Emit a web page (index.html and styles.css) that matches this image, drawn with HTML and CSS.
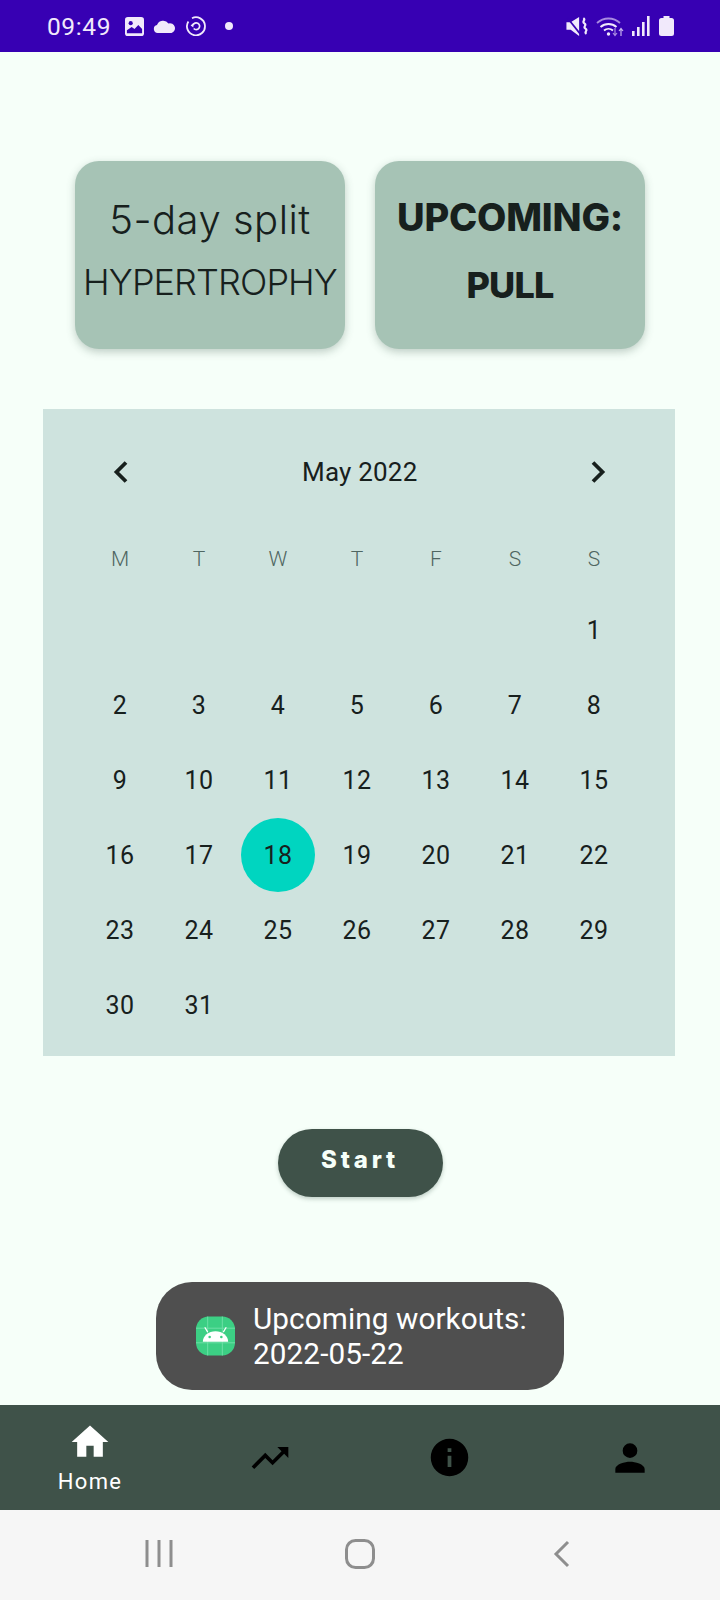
FILE: index.html
```html
<!DOCTYPE html>
<html>
	<head>
		<meta charset="UTF-8">
		<title>Home</title>
		<link rel="stylesheet" href="styles.css">
	</head>
	<body>
		<div class="status">
			<span class="time">09:49</span>
			<svg class="st-img" viewBox="0 0 20 20"><rect width="20" height="20" rx="3" fill="#f1e9fb"/><circle cx="6" cy="6.5" r="2.2" fill="#3700b3"/><path d="M2 17v-3l5-3.5 3 2 4-4 4 4v4.5z" fill="#3700b3"/></svg>
			<svg class="st-cloud" viewBox="0 0 22 13"><path d="M4.500 13a4 4 0 0 1-1-7.900A6.500 6.500 0 0 1 15 3.500a4.800 4.800 0 0 1 3 9.500z" fill="#f1e9fb"/></svg>
			<svg class="st-sync" viewBox="0 0 20 20"><path d="M6 2.200a9 9 0 1 1-3.600 3.200" fill="none" stroke="#f1e9fb" stroke-width="1.800"/><path d="M7 9.200a3.400 3.400 0 1 1 .7 3.300" fill="none" stroke="#f1e9fb" stroke-width="1.700"/><path d="M4.600 9.600l2.800-2.600v4.600z" fill="#f1e9fb"/></svg>
			<span class="st-dot"></span>
			<span class="st-gap"></span>
			<svg class="st-mute" viewBox="0 0 20 18"><path d="M0 5h4l8-5v18l-8-6H0z" fill="#f1e9fb"/><path d="M1 1l12 15" stroke="#3700b3" stroke-width="1.600"/><path d="M16 1c3 2-2 3 1 5s-2 3 1 5-2 3 1 5" fill="none" stroke="#f1e9fb" stroke-width="2"/></svg>
			<svg class="st-wifi" viewBox="0 0 29 21"><path d="M1 7a17 17 0 0 1 23 0" fill="none" stroke="#a98be0" stroke-width="1.800"/><path d="M4.500 11a12 12 0 0 1 16 0M8 14.500a7 7 0 0 1 9 0" fill="none" stroke="#f1e9fb" stroke-width="1.900"/><circle cx="12.500" cy="18" r="1.700" fill="#f1e9fb"/><path d="M19 12v7m-2-2l2 2.500 2-2.500" fill="none" stroke="#a98be0" stroke-width="1.200"/><path d="M25 20v-7m-2 2l2-2.500 2 2.500" fill="none" stroke="#c8b4ee" stroke-width="1.200"/></svg>
			<svg class="st-signal" viewBox="0 0 18 20"><rect x="0" y="15" width="2.600" height="5" fill="#f1e9fb"/><rect x="5" y="11" width="2.600" height="9" fill="#f1e9fb"/><rect x="10" y="6" width="2.600" height="14" fill="#f1e9fb"/><rect x="15" y="0" width="2.600" height="20" fill="#f1e9fb"/></svg>
			<svg class="st-batt" viewBox="0 0 15 20"><path d="M4.500 0h6v2h2a2.500 2.500 0 0 1 2.500 2.500V17.500a2.500 2.500 0 0 1-2.500 2.500h-10A2.500 2.500 0 0 1 0 17.500V4.500A2.500 2.500 0 0 1 2.500 2h2z" fill="#f1e9fb"/></svg>
		</div>

		<div class="main">
			<div class="cards">
				<div class="card">
					<p class="split">5-day split</p>
					<p class="kind">HYPERTROPHY</p>
				</div>
				<div class="card bold">
					<p>UPCOMING:</p>
					<p class="pull">PULL</p>
				</div>
			</div>

			<div class="calendar">
				<div class="cal-head">
					<svg class="arrow" viewBox="0 0 18 26"><path d="M15 3.500L5.500 13l9.500 9.500" fill="none" stroke="#17201d" stroke-width="3.800"/></svg>
					<span class="month">May 2022</span>
					<svg class="arrow" viewBox="0 0 18 26"><path d="M3 3.500l9.500 9.500L3 22.500" fill="none" stroke="#17201d" stroke-width="3.800"/></svg>
				</div>
				<div class="week">
					<span>M</span><span>T</span><span>W</span><span>T</span><span>F</span><span>S</span><span>S</span>
				</div>
				<div class="days">
					<span></span><span></span><span></span><span></span><span></span><span></span><span>1</span>
					<span>2</span><span>3</span><span>4</span><span>5</span><span>6</span><span>7</span><span>8</span>
					<span>9</span><span>10</span><span>11</span><span>12</span><span>13</span><span>14</span><span>15</span>
					<span>16</span><span>17</span><span class="today">18</span><span>19</span><span>20</span><span>21</span><span>22</span>
					<span>23</span><span>24</span><span>25</span><span>26</span><span>27</span><span>28</span><span>29</span>
					<span>30</span><span>31</span>
				</div>
			</div>

			<div class="start">Start</div>

			<div class="toast">
				<svg class="toast-icon" viewBox="0 0 40 40">
					<rect width="40" height="40" rx="13" fill="#3ccf84"/>
					<path d="M0 12h40M0 27h40M12 0v40M27 0v40" stroke="#6fe0a8" stroke-width="1"/>
					<path d="M7 26a13 11 0 0 1 26 0z" fill="#fff"/>
					<path d="M12 16l-3-5M28 16l3-5" stroke="#fff" stroke-width="1.300"/>
					<circle cx="14" cy="21" r="1.300" fill="#3ccf84"/><circle cx="26" cy="21" r="1.300" fill="#3ccf84"/>
				</svg>
				<div>Upcoming workouts:<br>2022-05-22</div>
			</div>
		</div>

		<div class="nav">
			<div class="nav-item on">
				<svg class="home" viewBox="0 0 24 24"><path d="M10 20v-6h4v6h5v-8h3L12 3 2 12h3v8z" fill="#fff"/></svg>
				<span>Home</span>
			</div>
			<div class="nav-item">
				<svg class="trend" viewBox="0 0 24 24"><path d="M16 6l2.290 2.290-4.880 4.880-4-4L2 16.590 3.410 18l6-6 4 4 6.300-6.290L22 12V6z"/></svg>
			</div>
			<div class="nav-item">
				<svg class="info" viewBox="0 0 24 24"><path d="M12 2a10 10 0 1 0 0 20 10 10 0 0 0 0-20zm1 15h-2v-6h2zm0-8h-2V7h2z"/></svg>
			</div>
			<div class="nav-item">
				<svg class="person" viewBox="0 0 24 24"><path d="M12 12a4 4 0 1 0 0-8 4 4 0 0 0 0 8zm0 2c-2.670 0-8 1.340-8 4v2h16v-2c0-2.660-5.330-4-8-4z"/></svg>
			</div>
		</div>

		<div class="sysbar">
			<svg class="sys-lines" viewBox="0 0 28 28"><path d="M2 0v27M14 0v27M26 0v27" stroke="#8e8e8e" stroke-width="3"/></svg>
			<svg class="sys-home" viewBox="0 0 30 30"><rect x="1.500" y="1.500" width="27" height="27" rx="9" fill="none" stroke="#8e8e8e" stroke-width="3"/></svg>
			<svg class="sys-back" viewBox="0 0 18 28"><path d="M15 2L3 14l12 12" fill="none" stroke="#8e8e8e" stroke-width="3"/></svg>
		</div>
	</body>
</html>
```

FILE: styles.css
```css
*{margin: 0;padding: 0;box-sizing: border-box;}
html,body{
	width: 720px;
	height: 1600px;
	overflow: hidden;
}
body{
	display: flex;
	flex-direction: column;
	background: #f6fff9;
	font-family: Roboto, "Liberation Sans", sans-serif;
	color: #17201d;
}

/* status bar */
.status{
	height: 52px;
	background: #3700b3;
	display: flex;
	align-items: center;
	padding-left: 47px;
	color: #f1e9fb;
}
.time{font-size: 24.5px;letter-spacing: 0.6px;width: 78px;}
.st-img{width: 19px;height: 19px;}
.st-cloud{width: 23px;height: 13px;margin-left: 9px;}
.st-sync{width: 20px;height: 20px;margin-left: 10px;}
.st-dot{width: 8px;height: 8px;border-radius: 50%;background: #f1e9fb;margin-left: 19px;}
.st-gap{flex: 1;}
.st-mute{width: 22px;height: 19px;}
.st-wifi{width: 29px;height: 21px;margin-left: 8px;}
.st-signal{width: 18px;height: 20px;margin-left: 7px;}
.st-batt{width: 15px;height: 20px;margin-left: 9px;margin-right: 46px;}

/* main area */
.main{
	flex: 1;
	position: relative;
	display: flex;
	flex-direction: column;
	align-items: center;
}
.cards{
	display: flex;
	gap: 30px;
	margin-top: 109px;
}
.card{
	width: 270px;
	height: 188px;
	background: #a6c3b5;
	border-radius: 24px;
	box-shadow: 0 3px 8px rgba(60,90,75,0.3);
	text-align: center;
	font-family: Inter, sans-serif;
	font-weight: 300;
	padding-top: 28px;
}
.card p{line-height: 62px;}
.split{font-size: 40px;letter-spacing: 0.5px;}
.kind{font-size: 36px;letter-spacing: -0.9px;}
.card.bold{padding-top: 22px;}
.card.bold p{
	font-size: 38px;
	font-weight: 800;
	line-height: 68px;
	letter-spacing: -0.2px;
}
.card.bold .pull{font-size: 36px;letter-spacing: -0.8px;}

/* calendar */
.calendar{
	width: 632px;
	height: 647px;
	margin-top: 60px;
	margin-right: 2px;
	background: #cee3de;
	padding: 0 41.5px 0 37.5px;
}
.cal-head{
	height: 126px;
	display: flex;
	align-items: center;
	justify-content: space-between;
	padding: 0 25px 0 30.5px;
}
.arrow{width: 18px;height: 26px;}
.month{font-size: 26px;letter-spacing: 0.2px;}
.week{
	display: grid;
	grid-template-columns: repeat(7,79px);
	text-align: center;
	font-size: 21px;
	font-weight: 300;
	color: #4f6661;
	height: 48px;
	line-height: 48px;
}
.days{
	display: grid;
	grid-template-columns: repeat(7,79px);
	grid-auto-rows: 75px;
	margin-top: 10px;
	font-size: 25px;
	letter-spacing: 0.5px;
	text-align: center;
	line-height: 75px;
}
.today{
	background: #00d5c0;
	border-radius: 50%;
	width: 74px;
	height: 74px;
	margin: 0 auto;
	line-height: 76px;
}

.start{
	margin-top: 73px;
	width: 165px;
	height: 68px;
	border-radius: 34px;
	background: #3f5249;
	box-shadow: 0 2px 4px rgba(60,90,75,0.3);
	color: #f6fff9;
	text-align: center;
	font-family: Inter, sans-serif;
	font-weight: 800;
	font-size: 24px;
	letter-spacing: 3.8px;
	line-height: 62px;
}

/* toast over the page */
.toast{
	position: absolute;
	left: 156px;
	top: 1230px;
	width: 408px;
	height: 108px;
	border-radius: 36px;
	background: #4f4f4f;
	color: #fff;
	font-size: 29.7px;
	letter-spacing: 0.1px;
	line-height: 35px;
	display: flex;
	align-items: center;
	gap: 18px;
	padding-left: 40px;
}
.toast-icon{width: 39px;height: 40px;}

/* bottom nav */
.nav{
	height: 105px;
	background: #3f5249;
	display: grid;
	grid-template-columns: repeat(4,1fr);
}
.nav-item{
	display: flex;
	flex-direction: column;
	align-items: center;
	justify-content: center;
}
.nav-item span{font-size: 22px;letter-spacing: 1.3px;color: #fff;line-height: 26px;margin-top: 3px;}
.home{width: 44px;height: 44px;margin-bottom: 2px;}
.trend{width: 44px;height: 44px;}
.info{width: 45px;height: 45px;margin-right: 2px;}
.person{width: 44px;height: 44px;margin-right: 1px;}

/* android buttons */
.sysbar{
	height: 90px;
	background: #f6f6f6;
	display: flex;
	align-items: center;
}
.sys-lines{width: 28px;height: 28px;margin-left: 145px;margin-bottom: 3px;}
.sys-home{width: 30px;height: 30px;margin-left: 172px;margin-bottom: 3px;}
.sys-back{width: 18px;height: 28px;margin-left: 178px;margin-bottom: 3px;}
```
